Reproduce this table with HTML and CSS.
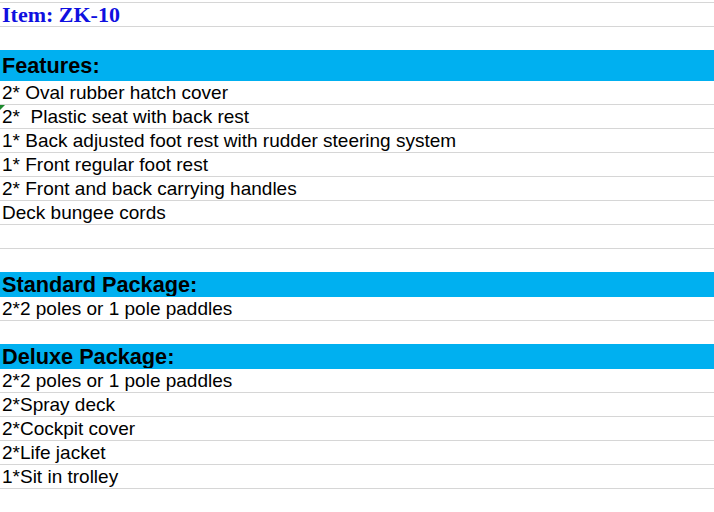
FILE: index.html
```html
<!DOCTYPE html>
<html lang="en">

<head>
    <meta charset="UTF-8">
    <meta name="viewport" content="width=device-width, initial-scale=1.0">
    <title>Item ZK-10</title>
    <link rel="stylesheet" href="styles.css">
</head>

<body>
    <section class="sheet">
        <!-- 标题 -->
        <div class="row item-title">Item: ZK-10</div>
        <div class="row"></div>

        <!-- Features -->
        <div class="row head head-tall">Features:</div>
        <div class="row after-head">2* Oval rubber hatch cover</div>
        <div class="row"><span class="err-mark"></span>2*&nbsp; Plastic seat with back rest</div>
        <div class="row">1* Back adjusted foot rest with rudder steering system</div>
        <div class="row">1* Front regular foot rest</div>
        <div class="row">2* Front and back carrying handles</div>
        <div class="row">Deck bungee cords</div>
        <div class="row"></div>
        <div class="row"></div>

        <!-- Standard -->
        <div class="row head">Standard Package:</div>
        <div class="row after-head">2*2 poles or 1 pole paddles</div>
        <div class="row"></div>

        <!-- Deluxe -->
        <div class="row head">Deluxe Package:</div>
        <div class="row after-head">2*2 poles or 1 pole paddles</div>
        <div class="row">2*Spray deck</div>
        <div class="row">2*Cockpit cover</div>
        <div class="row">2*Life jacket</div>
        <div class="row">1*Sit in trolley</div>
        <div class="row row-end"></div>
    </section>
</body>

</html>
```

FILE: styles.css
```css
body {
    margin: 0;
    padding-top: 2px;
    background: #fff;
    font-family: "Liberation Sans", Arial, sans-serif;
    font-size: 19px;
    color: #000;
}

.sheet {
    display: flex;
    flex-direction: column;
}

.row {
    position: relative;
    box-sizing: border-box;
    height: 24px;
    border-top: 1px solid #d6d6d6;
    padding-left: 2px;
    padding-top: 1px;
    display: flex;
    align-items: center;
    white-space: pre;
}

.row-end {
    height: 1px;
    padding-top: 0;
}

.item-title {
    font-family: "Liberation Serif", "Times New Roman", serif;
    font-weight: bold;
    font-size: 22px;
    color: #1010e0;
}

.head {
    background: #00b0f0;
    border-top-color: #00b0f0;
    font-weight: bold;
    font-size: 21.7px;
}

.head-tall {
    height: 30px;
}

.after-head {
    border-top-color: #00b0f0;
}

/* 绿色小三角 */
.err-mark {
    position: absolute;
    top: 0;
    left: 0;
    width: 0;
    height: 0;
    border-top: 5px solid #1e8a2e;
    border-right: 5px solid transparent;
}
```
